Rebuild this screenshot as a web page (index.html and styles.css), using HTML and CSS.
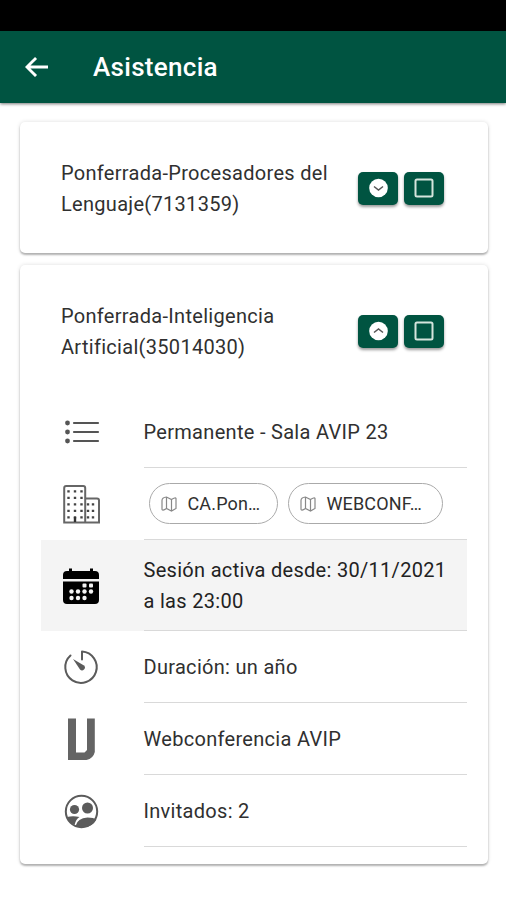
FILE: index.html
```html
<!DOCTYPE html>
<html lang="es">
<head>
<meta charset="utf-8">
<title>Asistencia</title>
<link rel="stylesheet" href="styles.css">
</head>
<body>
<div class="status"></div>
<header class="toolbar">
  <svg class="back" viewBox="0 0 24 22"><path d="M11.500 1.500 2 11l9.500 9.500M2 11h22"/></svg>
  <h1>Asistencia</h1>
</header>
<main>
  <section class="card card-small">
    <div class="card-head">
      <h2>Ponferrada-Procesadores del<br>Lenguaje(7131359)</h2>
      <div class="actions">
        <button><svg viewBox="0 0 20 20"><circle cx="10.500" cy="10" r="9.300" fill="#fff"/><path class="chev" d="m6 8.500 4.500 3.500L15 8.500"/></svg></button>
        <button><svg viewBox="0 0 20 20"><rect class="box" x="1.500" y="1.500" width="17" height="17" rx="1.500"/></svg></button>
      </div>
    </div>
  </section>
  <section class="card card-large">
    <div class="card-head">
      <h2>Ponferrada-Inteligencia<br>Artificial(35014030)</h2>
      <div class="actions">
        <button><svg viewBox="0 0 20 20"><circle cx="10.500" cy="10" r="9.300" fill="#fff"/><path class="chev" d="M6 11.500 10.500 8l4.500 3.500"/></svg></button>
        <button><svg viewBox="0 0 20 20"><rect class="box" x="1.500" y="1.500" width="17" height="17" rx="1.500"/></svg></button>
      </div>
    </div>
    <ul class="rows">
      <li>
        <svg class="icon" viewBox="0 0 40 40"><g fill="#555"><circle cx="6.500" cy="11" r="2.400"/><circle cx="6.500" cy="20" r="2.400"/><circle cx="6.500" cy="29" r="2.400"/></g><path d="M13 11h24M13 20h24M13 29h24" stroke="#555" stroke-width="2.200" stroke-linecap="round"/></svg>
        <div class="content">Permanente - Sala AVIP 23</div>
      </li>
      <li>
        <svg class="icon" viewBox="0 0 40 40"><g fill="none" stroke="#666" stroke-width="2"><path d="M3.200 38.500V4q0-2 2-2h17q2 0 2 2v34.500zM24.500 14.500H36q2 0 2 2v22H24.500"/></g><g stroke="#444" stroke-width="2.400" stroke-dasharray="2.400 4.100"><path d="M7.500 6.200v29M14 6.200v29M20.500 6.200v29M27 19.200v16M32 19.200v16"/></g><path d="M14 33v5" stroke="#333" stroke-width="2.400"/></svg>
        <div class="content chips">
          <span class="chip chip-a"><svg viewBox="0 0 16 16"><path d="M1 4.500Q1 1.500 5.500 1l5 2.500q4-2.500 4.500-1v10L10.500 15l-5-2.500Q1 15.500 1 13zM5.500 1v11.500M10.500 3.500V15"/></svg><span>CA.Pon…</span></span>
          <span class="chip chip-b"><svg viewBox="0 0 16 16"><path d="M1 4.500Q1 1.500 5.500 1l5 2.500q4-2.500 4.500-1v10L10.500 15l-5-2.500Q1 15.500 1 13zM5.500 1v11.500M10.500 3.500V15"/></svg><span>WEBCONF…</span></span>
        </div>
      </li>
      <li class="active">
        <svg class="icon" viewBox="0 0 40 40"><path d="M2 13V9q0-4 4-4h2V2.500h3V5h18V2.500h3V5h2q4 0 4 4v4zM2 15.500h36V34q0 4-4 4H6q-4 0-4-4z"/><g fill="#f4f4f4"><rect x="21.500" y="17.500" width="4" height="4" rx="1"/><rect x="28" y="17.500" width="4" height="4" rx="1"/><circle cx="10.500" cy="25.500" r="2.200"/><circle cx="17" cy="25.500" r="2.200"/><circle cx="23.500" cy="25.500" r="2.200"/><circle cx="30" cy="25.500" r="2.200"/><circle cx="10.500" cy="32" r="2.200"/><circle cx="17" cy="32" r="2.200"/><circle cx="23.500" cy="32" r="2.200"/></g></svg>
        <div class="content">Sesión activa desde: 30/11/2021<br>a las 23:00</div>
      </li>
      <li>
        <svg class="icon" viewBox="0 0 40 40"><path d="M9.500 8.500A15.700 15.700 0 1 0 21 4.500v8" fill="none" stroke="#5b5b5b" stroke-width="2" stroke-linecap="round" stroke-linejoin="round"/><path d="m12 12 11 6.500a2.800 2.800 0 0 1-4 4z" fill="#5b5b5b"/></svg>
        <div class="content">Duración: un año</div>
      </li>
      <li>
        <svg class="icon" viewBox="0 0 40 40"><path d="M7-.5h8v34h8.500L26 31V-.5h7.800V33q-1.500 6.500-8.300 8H7z" fill="#646464"/></svg>
        <div class="content">Webconferencia AVIP</div>
      </li>
      <li>
        <svg class="icon" viewBox="0 0 40 40"><circle cx="20.500" cy="20.500" r="15.700" fill="none" stroke="#5b5b5b" stroke-width="2"/><g fill="#5b5b5b"><circle cx="13.500" cy="18.500" r="4.600"/><circle cx="26.500" cy="17" r="5.500"/><path d="M6 26q6-1.500 12.500 0-3.500 2-5 8Q7.500 31 6 26zM14.500 35q2-8 12-8.500 6 0 9 2-6 11-21 6.500z"/></g></svg>
        <div class="content">Invitados: 2</div>
      </li>
    </ul>
  </section>
</main>
</body>
</html>
```
FILE: styles.css
```css
* { box-sizing: border-box; }
body { margin: 0; height: 900px; overflow: hidden; background: #fff; color: #303030; font: 20px/31px Roboto, sans-serif; letter-spacing: .3px; }
.status { height: 31px; background: #000; }
.toolbar { height: 72px; background: #005441; color: #fff; display: flex; align-items: center; padding-left: 25px; box-shadow: 0 1px 3px #0008; }
.back { width: 23px; height: 22px; fill: none; stroke: #fff; stroke-width: 3; }
h1 { margin: 0 0 0 45px; font-size: 26px; line-height: 32px; font-weight: 500; letter-spacing: .3px; }
h2 { margin: 0; padding-top: 2px; font: inherit; white-space: nowrap; }
main { padding: 19px 18px 0 20px; }
.card { border-radius: 5px; background: #fff; box-shadow: 0 2px 2px #0004, 0 0 4px #0002; }
.card-small { height: 131px; margin-bottom: 12px; padding-top: 35px; }
.card-large { height: 599px; padding-top: 35px; }
.card-head { display: flex; justify-content: space-between; align-items: center; height: 62px; padding: 0 44px 0 41px; }
.actions { display: flex; gap: 6px; }
button { width: 40px; height: 33px; padding: 0; border: 0; border-radius: 5px; background: #005441; box-shadow: 0 2px 3px #0006; display: flex; align-items: center; justify-content: center; }
button svg { width: 20px; height: 20px; }
.chev { fill: none; stroke: #555; stroke-width: 1.500; }
.box { fill: none; stroke: #d5e5dd; stroke-width: 2; }
.rows { list-style: none; margin: 34px 0 0; padding: 0 21px; }
.rows li { height: 72px; display: flex; align-items: center; }
.icon { width: 40px; height: 40px; margin: 0 42.5px 0 20px; flex: none; overflow: visible; }
.content { flex: 1; height: 100%; padding-top: 21px; border-bottom: 1px solid #d9d9d9; white-space: nowrap; }
.rows .active { height: 91px; background: #f4f4f4; }
.active .content { padding-top: 15px; color: #222; }
.content.chips { display: flex; gap: 10px; padding: 15px 0 0 5px; }
.chip { height: 41px; border: 1px solid #aaa; border-radius: 21px; display: flex; align-items: center; gap: 11px; padding-left: 11px; font-size: 18px; letter-spacing: .15px; }
.chip svg { width: 16px; height: 16px; fill: none; stroke: #888; stroke-width: 1.200; }
.chip-a { width: 129px; }
.chip-b { width: 155px; }
```
